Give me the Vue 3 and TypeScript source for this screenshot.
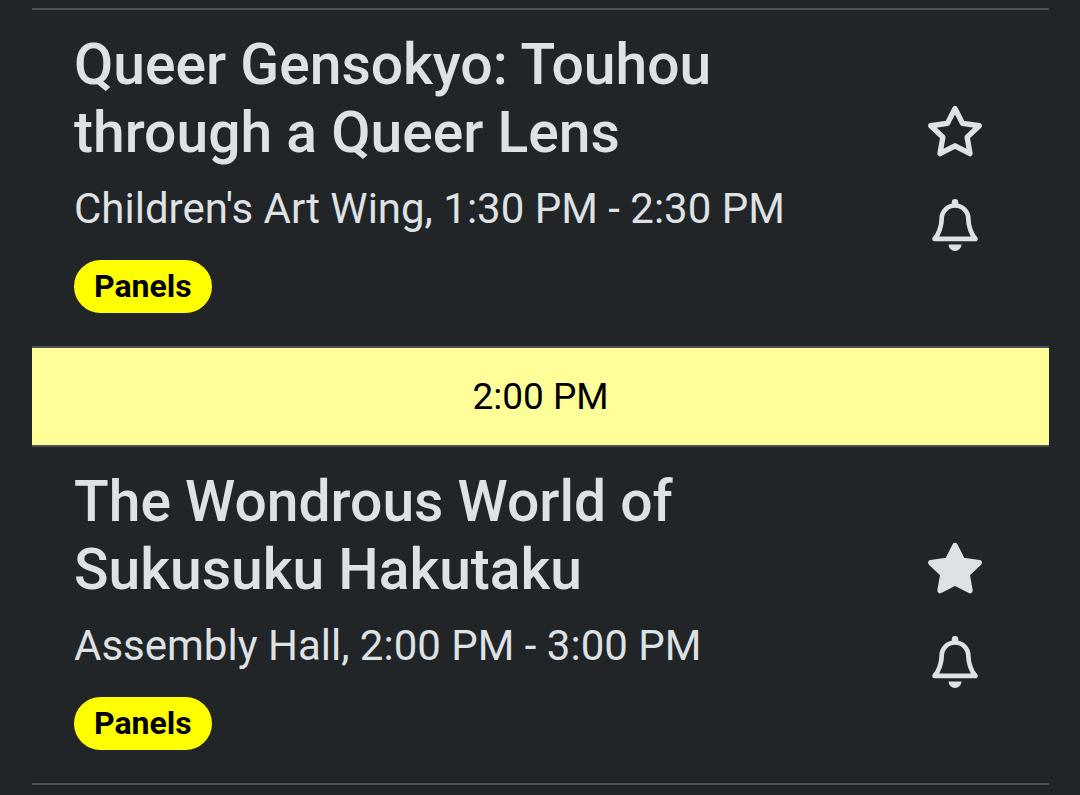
<script setup lang="ts">
import { ref } from 'vue'

interface Session {
  id: string
  title: string
  place: string
  tag: string
  starred: boolean
  slot?: string
}

const sessions = ref<Session[]>([
  {
    id: 'gensokyo',
    title: 'Queer Gensokyo: Touhou through a Queer Lens',
    place: "Children's Art Wing, 1:30 PM - 2:30 PM",
    tag: 'Panels',
    starred: false,
  },
  {
    id: 'hakutaku',
    title: 'The Wondrous World of Sukusuku Hakutaku',
    place: 'Assembly Hall, 2:00 PM - 3:00 PM',
    tag: 'Panels',
    starred: true,
    slot: '2:00 PM',
  },
])
</script>

<template>
  <main class="schedule">
    <template v-for="s in sessions" :key="s.id">
      <div v-if="s.slot" class="slot">{{ s.slot }}</div>
      <article class="session">
        <div class="details">
          <h2>{{ s.title }}</h2>
          <p>{{ s.place }}</p>
          <span class="tag">{{ s.tag }}</span>
        </div>
        <div class="actions">
          <button type="button" aria-label="Favourite" :aria-pressed="s.starred" @click="s.starred = !s.starred">
            <svg class="star" viewBox="0 0 16 16" aria-hidden="true">
              <path v-if="s.starred" d="M3.612 15.443c-.386.198-.824-.149-.746-.592l.83-4.73L.173 6.765c-.329-.314-.158-.888.283-.95l4.898-.696L7.538.792c.197-.39.73-.39.927 0l2.184 4.327 4.898.696c.441.062.612.636.282.95l-3.522 3.356.83 4.73c.078.443-.36.79-.746.592L8 13.187l-4.389 2.256z" />
              <path v-else d="M2.866 14.85c-.078.444.36.791.746.593l4.39-2.256 4.389 2.256c.386.198.824-.149.746-.592l-.83-4.73 3.522-3.356c.33-.314.16-.888-.282-.95l-4.898-.696L8.465.792a.513.513 0 0 0-.927 0L5.354 5.12l-4.898.696c-.441.062-.612.636-.283.95l3.523 3.356-.83 4.73zm4.905-2.767-3.686 1.894.694-3.957a.565.565 0 0 0-.163-.505L1.71 6.745l4.052-.576a.525.525 0 0 0 .393-.288L8 2.223l1.847 3.658a.525.525 0 0 0 .393.288l4.052.575-2.906 2.77a.565.565 0 0 0-.163.506l.694 3.957-3.686-1.894a.503.503 0 0 0-.461 0z" />
            </svg>
          </button>
          <button type="button" aria-label="Remind me">
            <svg viewBox="0 0 16 16" aria-hidden="true">
              <path class="bell" d="M1.7 12.3C3 10.9 3.9 8.2 3.9 6.1a4.1 4.1 0 0 1 8.2 0c0 2.1.9 4.8 2.2 6.2z" />
              <circle cx="8" cy="1" r="1" />
              <path d="M8 16a2 2 0 0 0 2-2H6a2 2 0 0 0 2 2z" />
            </svg>
          </button>
        </div>
      </article>
    </template>
  </main>
</template>

<style>
body {
  margin: 0;
  background: #212528;
}
</style>

<style scoped>
.schedule {
  padding: 8px 31px 0 32px;
  background: #212528;
  color: #dee2e4;
  font-family: Roboto, sans-serif;
}

.session {
  display: flex;
  align-items: flex-start;
  justify-content: space-between;
  padding: 21px 68px 33px 42px;
  border-top: 2px solid #495057;
}

.session:last-child {
  border-bottom: 2px solid #495057;
}

.slot + .session {
  border-top-color: #4d5154;
}

.details {
  max-width: 720px;
}

h2 {
  max-width: 660px;
  margin: 0;
  font-size: 57px;
  font-weight: 500;
  line-height: 68px;
}

p {
  margin: 10px 0 19px;
  font-size: 42px;
  line-height: 64px;
}

.tag {
  display: block;
  width: fit-content;
  padding: 0 20px;
  border-radius: 27px;
  background: #ffff00;
  color: #000;
  font-size: 32px;
  font-weight: 700;
  line-height: 53px;
}

.actions {
  display: flex;
  flex-direction: column;
  gap: 42px;
  padding-top: 74px;
}

button {
  display: block;
  padding: 0;
  border: 0;
  background: none;
  color: inherit;
}

svg {
  display: block;
  width: 52px;
  height: 52px;
  overflow: visible;
  fill: currentColor;
}

.star {
  stroke: currentColor;
  stroke-width: 0.6;
  stroke-linejoin: round;
}

.bell {
  fill: none;
  stroke: currentColor;
  stroke-width: 1.45;
  stroke-linejoin: round;
}

.slot {
  border-top: 2px solid #495057;
  background: #ffff99;
  color: #000;
  font-size: 37px;
  line-height: 97px;
  text-align: center;
}
</style>
